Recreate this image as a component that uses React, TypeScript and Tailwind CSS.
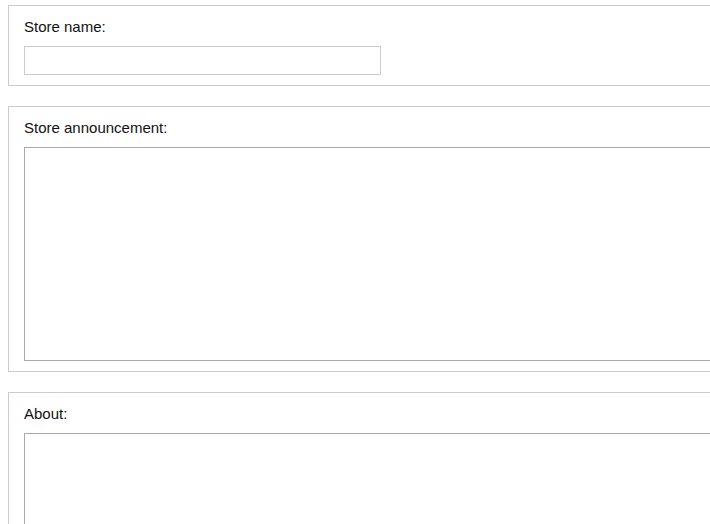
import React from 'react';

const fields = [
  { label: 'Store name:', kind: 'input' },
  { label: 'Store announcement:', kind: 'textarea' },
  { label: 'About:', kind: 'textarea' },
];

export default function App() {
  return (
    <div className="w-[710px] h-[524px] overflow-hidden bg-white font-['Liberation_Sans',Arial,sans-serif] text-[15px] text-[#111111]">
      <div className="w-[900px] pl-2 pt-[5px] flex flex-col gap-5">
        {fields.map((field) => (
          <div key={field.label} className="border border-[#cccccc] pt-3 pb-[10px] px-[15px]">
            <label className="block leading-[17px] mb-[11px]">{field.label}</label>
            {field.kind === 'input' ? (
              <input type="text" className="block w-[357px] h-[29px] border border-[#cccccc] outline-none" />
            ) : (
              <textarea className="block w-full h-[214px] border border-[#a9a9a9] outline-none resize-none" />
            )}
          </div>
        ))}
      </div>
    </div>
  );
}
